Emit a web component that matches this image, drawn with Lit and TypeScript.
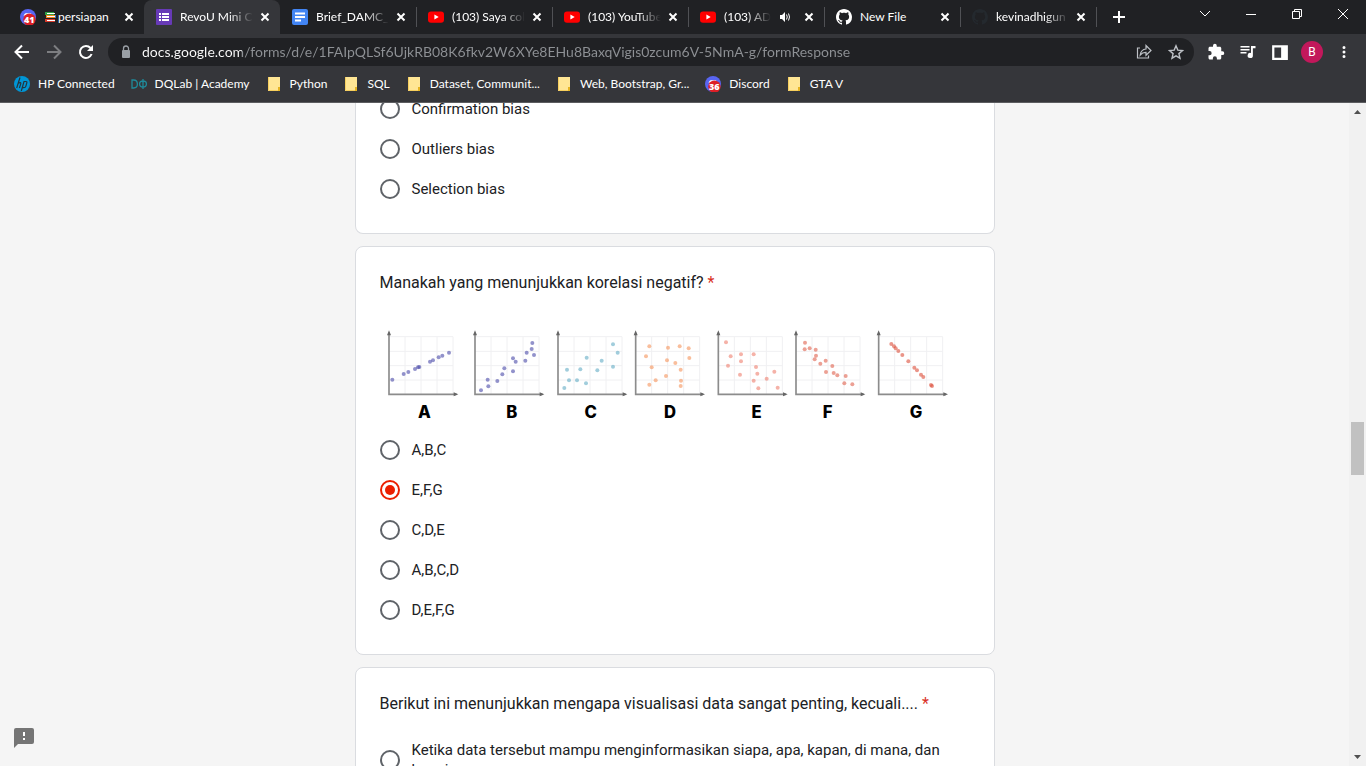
import { LitElement, html, svg, css, nothing, TemplateResult } from "lit";
import { customElement, property, state } from "lit/decorators.js";
import { classMap } from "lit/directives/class-map.js";

/* ---------- icons ---------- */

const discord = (n: string) => html`<svg class="i16" viewBox="0 0 16 16" aria-hidden="true">
  <circle cx="8" cy="8" r="8" fill="#5865f2" />
  <path d="M3.6 6.6Q5 3.6 6.6 4.2h2.8q1.8-.6 3 2.4l-1 1H4.4z" fill="#fff" />
  <circle cx="9.4" cy="10.6" r="6.2" fill="#dd1f26" />
  <text x="9.2" y="14.2" text-anchor="middle" font-family="Open Sans, sans-serif" font-size="9" font-weight="800" fill="#fff">${n}</text>
</svg>`;

const formsIcon = html`<svg class="i16" viewBox="0 0 16 16" aria-hidden="true">
  <rect width="16" height="16" rx="1" fill="#673ab7" />
  <path d="M3 4h2v2H3zm3 0h7v2H6zM3 7h2v2H3zm3 0h7v2H6zM3 10h2v2H3zm3 0h7v2H6z" fill="#fff" />
</svg>`;

const docsIcon = html`<svg class="i16" viewBox="0 0 16 16" aria-hidden="true">
  <rect width="16" height="16" rx="2" fill="#4285f4" />
  <path d="M3 3.5h10v2H3zm0 3.5h10v2H3zm0 3.5h6v2H3z" fill="#fff" />
</svg>`;

const youtube = html`<svg class="i16" viewBox="0 0 16 16" aria-hidden="true">
  <rect y="2.4" width="16" height="11.4" rx="3" fill="#f00" />
  <path d="M6.4 5.6v5l4.3-2.5z" fill="#fff" />
</svg>`;

const github = (fill: string) => html`<svg class="i16" viewBox="0 0 16 16" aria-hidden="true">
  <path fill=${fill} d="M8 0C3.58 0 0 3.58 0 8c0 3.54 2.29 6.53 5.47 7.59.4.07.55-.17.55-.38 0-.19-.01-.82-.01-1.49-2.01.37-2.53-.49-2.69-.94-.09-.23-.48-.94-.82-1.13-.28-.15-.68-.52-.01-.53.63-.01 1.08.58 1.23.82.72 1.21 1.87.87 2.33.66.07-.52.28-.87.51-1.07-1.78-.2-3.64-.89-3.64-3.95 0-.87.31-1.59.82-2.15-.08-.2-.36-1.02.08-2.12 0 0 .67-.21 2.2.82.64-.18 1.32-.27 2-.27s1.36.09 2 .27c1.53-1.04 2.2-.82 2.2-.82.44 1.1.16 1.92.08 2.12.51.56.82 1.27.82 2.15 0 3.07-1.87 3.75-3.65 3.95.29.25.54.73.54 1.48 0 1.07-.01 1.93-.01 2.2 0 .21.15.46.55.38A8.01 8.01 0 0 0 16 8c0-4.42-3.58-8-8-8z" />
</svg>`;

const folder = html`<svg class="i16" viewBox="0 0 16 16" aria-hidden="true">
  <path d="M2 1h12v10.500h-1V15H2z" fill="#ffe694" />
  <path d="M2.500 1v13.500h10" fill="none" stroke="#f6cf5f" />
  <path d="M12 11h2v4h-2z" fill="#e6b422" />
</svg>`;

const hp = html`<svg class="i16" viewBox="0 0 16 16" aria-hidden="true">
  <circle cx="8" cy="8" r="8" fill="#0096d6" />
  <path d="M6 1.500 2.700 12M4.300 7.200q2.900-1.200 2.500.4L5.400 12M12 5.500h-2L7.300 15M12 5.500q1.200 0 .8 1.400l-1 3.400q-.4 1.400-2 1.400H8.400" fill="none" stroke="#25333c" stroke-width="1.200" />
</svg>`;

const dqlab = html`<svg class="i16" viewBox="0 0 16 16" aria-hidden="true">
  <path d="M1 4v8h1.600q3.800 0 3.800-4T2.600 4zM12 3v10M12 5q-3.400 0-3.400 3t3.400 3 3.400-3-3.400-3z" fill="none" stroke="#1f8b9b" stroke-width="1.300" />
</svg>`;

const speaker = html`<svg class="audio" viewBox="0 0 12 12" role="img" aria-label="Audio"><path d="M1 4h2l3-3v10L3 8H1z" fill="#fff" /><path d="M7.500 3.500q1.500 2.500 0 5M9.500 2.500q2 3.500 0 7" fill="none" stroke="#fff" /></svg>`;

const glyph = (d: string, cls = "i16") => html`<svg class=${cls} viewBox="0 0 16 16" aria-hidden="true"><path d=${d} fill="none" stroke="currentColor" stroke-width="2" /></svg>`;
const thin = (d: string) => html`<svg class="i16" viewBox="0 0 16 16" aria-hidden="true"><path d=${d} fill="none" stroke="currentColor" stroke-width="1" /></svg>`;
const solid = (d: string, box = 24) => html`<svg class="i18" viewBox="0 0 ${box} ${box}" aria-hidden="true"><path d=${d} fill="currentColor" /></svg>`;

/* ---------- data ---------- */

interface Tab { title: string; icon: TemplateResult; active?: boolean; audio?: boolean; books?: boolean; whole?: boolean }

const TABS: Tab[] = [
  { title: "persiapan", icon: discord("41"), books: true, whole: true },
  { title: "RevoU Mini C", icon: formsIcon, active: true },
  { title: "Brief_DAMC_E", icon: docsIcon },
  { title: "(103) Saya col", icon: youtube },
  { title: "(103) YouTube", icon: youtube },
  { title: "(103) ADE", icon: youtube, audio: true },
  { title: "New File", icon: github("#fff"), whole: true },
  { title: "kevinadhigun", icon: github("#24292e") },
];

const BOOKMARKS: { title: string; icon: TemplateResult }[] = [
  { title: "HP Connected", icon: hp },
  { title: "DQLab | Academy", icon: dqlab },
  { title: "Python", icon: folder },
  { title: "SQL", icon: folder },
  { title: "Dataset, Communit...", icon: folder },
  { title: "Web, Bootstrap, Gr...", icon: folder },
  { title: "Discord", icon: discord("36") },
  { title: "GTA V", icon: folder },
];

interface Plot { label: string; x: number; labelX: number; color: string; points: number[][] }

/* Points share the coordinate space of the whole strip. */
const PLOTS: Plot[] = [
  { label: "A", x: 57, labelX: 163, color: "#4a4aa8", points: [[67, 179], [101, 162], [115, 156], [135, 147], [144, 142], [148, 141], [180, 125], [189, 121], [206, 112], [217, 107], [237, 98]] },
  { label: "B", x: 315, labelX: 425, color: "#4a4aa8", points: [[333, 211], [355, 199], [353, 179], [382, 183], [397, 163], [403, 145], [429, 154], [437, 125], [429, 115], [466, 122], [470, 98], [492, 105], [485, 87], [487, 69]] },
  { label: "C", x: 564, labelX: 662, color: "#62abc4", points: [[583, 204], [597, 181], [591, 149], [621, 181], [648, 190], [631, 148], [650, 113], [682, 151], [695, 122], [729, 140], [743, 98], [729, 73]] },
  { label: "D", x: 797, labelX: 900, color: "#f5935a", points: [[838, 79], [828, 109], [845, 142], [857, 181], [838, 194], [894, 83], [891, 121], [888, 168], [929, 79], [956, 85], [958, 114], [916, 129], [932, 149], [933, 182], [932, 198]] },
  { label: "E", x: 1045, labelX: 1160, color: "#ee7f6e", points: [[1068, 67], [1082, 109], [1113, 103], [1151, 103], [1074, 137], [1113, 124], [1158, 141], [1110, 164], [1162, 161], [1151, 182], [1213, 155], [1190, 176], [1165, 205], [1223, 203]] },
  { label: "F", x: 1278, labelX: 1373, color: "#e0604c", points: [[1305, 68], [1304, 88], [1319, 85], [1337, 89], [1338, 107], [1334, 118], [1351, 131], [1367, 122], [1387, 138], [1368, 156], [1391, 159], [1402, 166], [1427, 168], [1423, 190], [1447, 193]] },
  { label: "G", x: 1526, labelX: 1638, color: "#dc4f3a", points: [[1564, 72], [1572, 79], [1577, 85], [1585, 93], [1597, 105], [1615, 124], [1633, 143], [1641, 151], [1653, 164], [1660, 171], [1683, 195], [1686, 198]] },
];

/* ---------- question card ---------- */

@customElement("form-question")
class FormQuestion extends LitElement {
  @property() question = "";
  @property() name = "";
  @property() value = "";
  @property({ attribute: false }) options: string[] = [];
  @property({ type: Boolean, reflect: true }) continued = false;

  static styles = css`
    :host { display: block; }
    .card { margin: 0; padding: 24px; min-width: 0; background: #fff; border: 1px solid #dadce0; border-radius: 8px; color: #202124; font-family: Roboto, sans-serif; }
    :host([continued]) .card { border-top: 0; border-radius: 0 0 8px 8px; padding-top: 0; }
    .title { margin: 0 0 24px; font-size: 16px; line-height: 24px; font-weight: 400; }
    .star { color: #d93025; }
    .option { display: flex; align-items: center; gap: 12px; min-height: 40px; font-size: 15px; line-height: 20px; }
    .radio { appearance: none; flex: none; box-sizing: border-box; width: 20px; height: 20px; margin: 0; border: 2px solid #5f6368; border-radius: 50%; display: grid; place-items: center; }
    .radio:checked { border-color: #eb1f00; }
    .radio:checked::before { content: ""; width: 10px; height: 10px; border-radius: 50%; background: #eb1f00; }
  `;

  render() {
    return html`<section class="card" role="radiogroup" aria-label=${this.question || this.name}>
      ${this.question ? html`<h2 class="title">${this.question} <span class="star">*</span></h2>` : nothing}
      <slot></slot>
      ${this.options.map((o, i) => html`<label class="option" for="o${i}">
        <input class="radio" type="radio" id="o${i}" name=${this.name} .value=${o} ?checked=${o === this.value} />
        <span>${o}</span>
      </label>`)}
    </section>`;
  }
}

/* ---------- strip of scatter plots ---------- */

@customElement("scatter-strip")
class ScatterStrip extends LitElement {
  static styles = css`
    :host { display: block; }
    .strip { display: block; width: 100%; }
    .grid { stroke: #f0f0f2; stroke-width: 3; fill: none; }
    .axis { stroke: #8c8c8c; stroke-width: 5; fill: none; }
    .tip { fill: #666; }
    .label { font: 800 50px Inter, sans-serif; fill: #000; text-anchor: middle; }
  `;

  plot(p: Plot) {
    const grid = [48, 96, 144, 192].map((d) => `M${p.x + d} 50V222`).join("") + [50, 94, 137, 180].map((y) => `M${p.x} ${y}h192`).join("");
    return svg`
      <path class="grid" d=${grid} />
      <path class="axis" d="M${p.x} 38V223H${p.x + 202}" />
      <path class="tip" d="M${p.x} 31l6 15h-12zM${p.x + 208} 223l-14 6v-12z" />
      ${p.points.map(([x, y]) => svg`<circle cx=${x} cy=${y} r="6" fill=${p.color} fill-opacity=".6" />`)}
      <text class="label" x=${p.labelX} y="294">${p.label}</text>`;
  }

  render() {
    return html`<svg class="strip" viewBox="30 -3 1770 333" role="img" aria-label="A, B, C, D, E, F, G">${PLOTS.map((p) => this.plot(p))}</svg>`;
  }
}

/* ---------- page ---------- */

@customElement("app-root")
class AppRoot extends LitElement {
  @state() tabs = TABS;

  static styles = css`
    :host { display: flex; flex-direction: column; height: 100vh; overflow: hidden; background: #f5f5f5; font-family: Lato, sans-serif; font-size: 12px; line-height: 16px; }
    button { padding: 0; border: 0; background: none; color: inherit; font: inherit; display: grid; place-items: center; }
    .i16 { width: 16px; height: 16px; flex: none; display: block; }
    .i18 { width: 18px; height: 18px; display: block; }
    .chrome { flex: none; background: #35363a; color: #fff; border-bottom: 1px solid #5c5d60; }

    .tabstrip { display: flex; height: 34px; padding-left: 8px; background: #202124; }
    .tab { flex: 0 1 136px; min-width: 0; box-sizing: border-box; display: flex; align-items: center; gap: 4px; padding: 0 7px 0 12px; }
    .ruled { background: linear-gradient(#505155, #505155) left center / 1px 20px no-repeat; }
    .tab.active { background: #35363a; border-radius: 8px 8px 0 0; }
    .tabtitle { flex: 1; min-width: 0; display: flex; align-items: center; gap: 2px; padding-left: 4px; overflow: hidden; white-space: nowrap; mask-image: linear-gradient(90deg, #000 calc(100% - 24px), transparent); }
    .tabtitle.whole { mask-image: none; }
    .books { width: 12px; height: 12px; flex: none; }
    .audio { width: 12px; height: 12px; flex: none; margin: 0 6px 0 4px; }
    .close { flex: none; width: 16px; height: 16px; }
    .newtab { width: 46px; }
    .window { margin-left: auto; display: flex; height: 28px; }
    .winbtn { width: 46px; }

    .toolbar { display: flex; align-items: center; gap: 6px; padding: 4px 6px 3px; }
    .group { display: flex; }
    .tool { width: 32px; height: 28px; }
    .dim { color: #7d7e81; }
    .omnibox { flex: 1; min-width: 0; display: flex; align-items: center; height: 28px; padding: 0 2px 0 10px; border-radius: 14px; background: #202124; color: #bdc1c6; }
    .url { flex: 1; min-width: 0; margin: 0; padding: 0 0 0 8px; border: 0; outline: 0; font: 14px/20px Lato, sans-serif; color: transparent; background: linear-gradient(90deg, #fff 108px, #8e9195 108px); background-clip: text; -webkit-background-clip: text; }
    .avatar { width: 22px; height: 22px; border-radius: 50%; background: #c2185b; display: grid; place-items: center; font-family: Roboto, sans-serif; }

    .bookmarks { display: flex; align-items: center; gap: 16px; height: 33px; padding: 0 14px; box-sizing: border-box; }
    .bookmark { display: flex; align-items: center; gap: 8px; color: #fff; text-decoration: none; white-space: nowrap; padding-bottom: 3px; }

    .body { flex: 1; min-height: 0; display: flex; position: relative; }
    .view { flex: 1; min-width: 0; overflow: hidden; }
    .feed { display: flex; flex-direction: column; gap: 12px; max-width: 640px; margin: -14px auto 0; }
    .feedback { position: absolute; left: 14px; bottom: 18px; width: 20px; height: 20px; color: #757575; }
    .scroll { flex: none; width: 17px; background: #f1f1f1; display: flex; flex-direction: column; align-items: center; color: #505050; }
    .arrow { width: 17px; height: 17px; }
    .before { flex: 302; }
    .thumb { width: 13px; height: 53px; background: #c1c1c1; }
    .after { flex: 274; }
  `;

  renderTab(t: Tab, i: number) {
    return html`<div class=${classMap({ tab: true, active: !!t.active, ruled: i > 2 })} role="tab" aria-selected=${t.active ? "true" : "false"}>
      ${t.icon}
      <span class=${classMap({ tabtitle: true, whole: !!t.whole })}>
        ${t.books ? html`<svg class="books" viewBox="0 0 12 12" aria-hidden="true"><path d="M1 1h9v3H1z" fill="#2ea043" /><path d="M3 4h9v3H3z" fill="#2f7bd0" /><path d="M2 4h9v3H2z" fill="#f4881f" /><path d="M1 8h10v3H1z" fill="#d83b2b" /><path d="M3 2h8v1H3zM3 5h8v1H3zM3 9h8v1H3z" fill="#fff" /></svg>` : nothing}<span>${t.title}</span>
      </span>
      ${t.audio ? speaker : nothing}
      <button class="close" aria-label="Close">${glyph("M4.500 4.500l7 7M11.500 4.500l-7 7")}</button>
    </div>`;
  }

  render() {
    return html`
      <header class="chrome">
        <div class="tabstrip">
          ${this.tabs.map((t, i) => this.renderTab(t, i))}
          <button class="newtab ruled" aria-label="New tab">${glyph("M8 2v12M2 8h12")}</button>
          <div class="window">
            <button class="winbtn" aria-label="Search tabs">${thin("M3 5l5 5 5-5")}</button>
            <button class="winbtn" aria-label="Minimize">${thin("M3 8.500h10")}</button>
            <button class="winbtn" aria-label="Restore">${thin("M3.500 5.500h7v7h-7zM5.500 5.500v-2h7v7h-2")}</button>
            <button class="winbtn" aria-label="Close window">${thin("M3 3l10 10M13 3L3 13")}</button>
          </div>
        </div>
        <div class="toolbar">
          <div class="group">
            <button class="tool" aria-label="Back">${glyph("M15 8H2M8 1.500L1.500 8l6.500 6.500")}</button>
            <button class="tool dim" aria-label="Forward">${glyph("M1 8h13M8 1.500L14.500 8 8 14.500")}</button>
            <button class="tool" aria-label="Reload">${html`<svg class="i16" viewBox="0 0 16 16" aria-hidden="true"><path d="M13.600 10A6 6 0 1 1 12.500 4" fill="none" stroke="currentColor" stroke-width="2" /><path d="M15 1v6H9z" fill="currentColor" /></svg>`}</button>
          </div>
          <div class="omnibox">
            <svg class="i16" viewBox="0 0 16 16" aria-hidden="true"><rect x="4" y="6" width="8" height="8" rx="1" fill="#9aa0a6" /><path d="M5.500 6.500v-2a2.500 2.500 0 0 1 5 0v2" fill="none" stroke="#9aa0a6" stroke-width="1.300" /></svg>
            <input class="url" aria-label="Address" value="docs.google.com/forms/d/e/1FAIpQLSf6UjkRB08K6fkv2W6XYe8EHu8BaxqVigis0zcum6V-5NmA-g/formResponse" />
            <button class="tool" aria-label="Share">${html`<svg class="i16" viewBox="0 0 16 16" aria-hidden="true"><path d="M4 4H1.500v10h11v-2.500M10 1.500V5q-5 .5-5.800 6Q6.500 8.200 10 8.300v3L15 6.500z" fill="none" stroke="currentColor" stroke-width="1.200" /></svg>`}</button>
            <button class="tool" aria-label="Bookmark">${html`<svg class="i16" viewBox="0 0 16 16" aria-hidden="true"><path d="M8 1.800l1.800 4.300 4.700.4-3.600 3.100 1.100 4.600L8 11.800l-4 2.400 1.100-4.600-3.600-3.100 4.700-.4z" fill="none" stroke="currentColor" stroke-width="1.400" /></svg>`}</button>
          </div>
          <div class="group">
            <button class="tool" aria-label="Extensions">${solid("M20.500 11H19V7c0-1.100-.9-2-2-2h-4V3.500a2.500 2.500 0 0 0-5 0V5H4c-1.100 0-2 .9-2 2v3.800h1.500a2.700 2.700 0 0 1 0 5.400H2V20c0 1.100.9 2 2 2h3.800v-1.500a2.700 2.700 0 0 1 5.400 0V22H17c1.100 0 2-.9 2-2v-4h1.500a2.500 2.500 0 0 0 0-5z")}</button>
            <button class="tool" aria-label="Media">${solid("M2 4h12v2H2zm0 4h12v2H2zm0 4h8v2H2zM16 4h6v3h-3.500v9.500a3.500 3.500 0 1 1-2.500-3.300z")}</button>
            <button class="tool" aria-label="Side panel">${solid("M1 2h14v13H1zM3 4v9h6V4z", 16)}</button>
            <button class="tool" aria-label="Profile"><span class="avatar">B</span></button>
            <button class="tool" aria-label="Menu">${solid("M12 8a2 2 0 1 0 0-4 2 2 0 0 0 0 4zm0 2a2 2 0 1 0 0 4 2 2 0 0 0 0-4zm0 6a2 2 0 1 0 0 4 2 2 0 0 0 0-4z")}</button>
          </div>
        </div>
        <nav class="bookmarks">${BOOKMARKS.map((b) => html`<a class="bookmark" href="#">${b.icon}<span>${b.title}</span></a>`)}</nav>
      </header>
      <div class="body">
        <main class="view">
          <div class="feed">
            <form-question continued name="Bias" .options=${["Confirmation bias", "Outliers bias", "Selection bias"]}></form-question>
            <form-question name="correlation" question="Manakah yang menunjukkan korelasi negatif?" value="E,F,G"
              .options=${["A,B,C", "E,F,G", "C,D,E", "A,B,C,D", "D,E,F,G"]}><scatter-strip></scatter-strip></form-question>
            <form-question name="visual" question="Berikut ini menunjukkan mengapa visualisasi data sangat penting, kecuali...."
              .options=${["Ketika data tersebut mampu menginformasikan siapa, apa, kapan, di mana, dan bagaimana"]}></form-question>
          </div>
        </main>
        <button class="feedback" aria-label="Feedback"><svg class="feedbackicon" width="20" height="20" viewBox="0 0 20 20" aria-hidden="true"><path d="M2 0h16q2 0 2 2v12q0 2-2 2H4l-4 4V2q0-2 2-2z" fill="currentColor" /><path d="M9 4h2v4H9zm0 6h2v2H9z" fill="#fff" /></svg></button>
        <div class="scroll" aria-hidden="true">
          <svg class="arrow" viewBox="0 0 17 17"><path d="M5 11h7L8.500 7z" fill="currentColor" /></svg>
          <div class="before"></div><div class="thumb"></div><div class="after"></div>
          <svg class="arrow" viewBox="0 0 17 17"><path d="M5 6h7l-3.500 4z" fill="currentColor" /></svg>
        </div>
      </div>`;
  }
}
